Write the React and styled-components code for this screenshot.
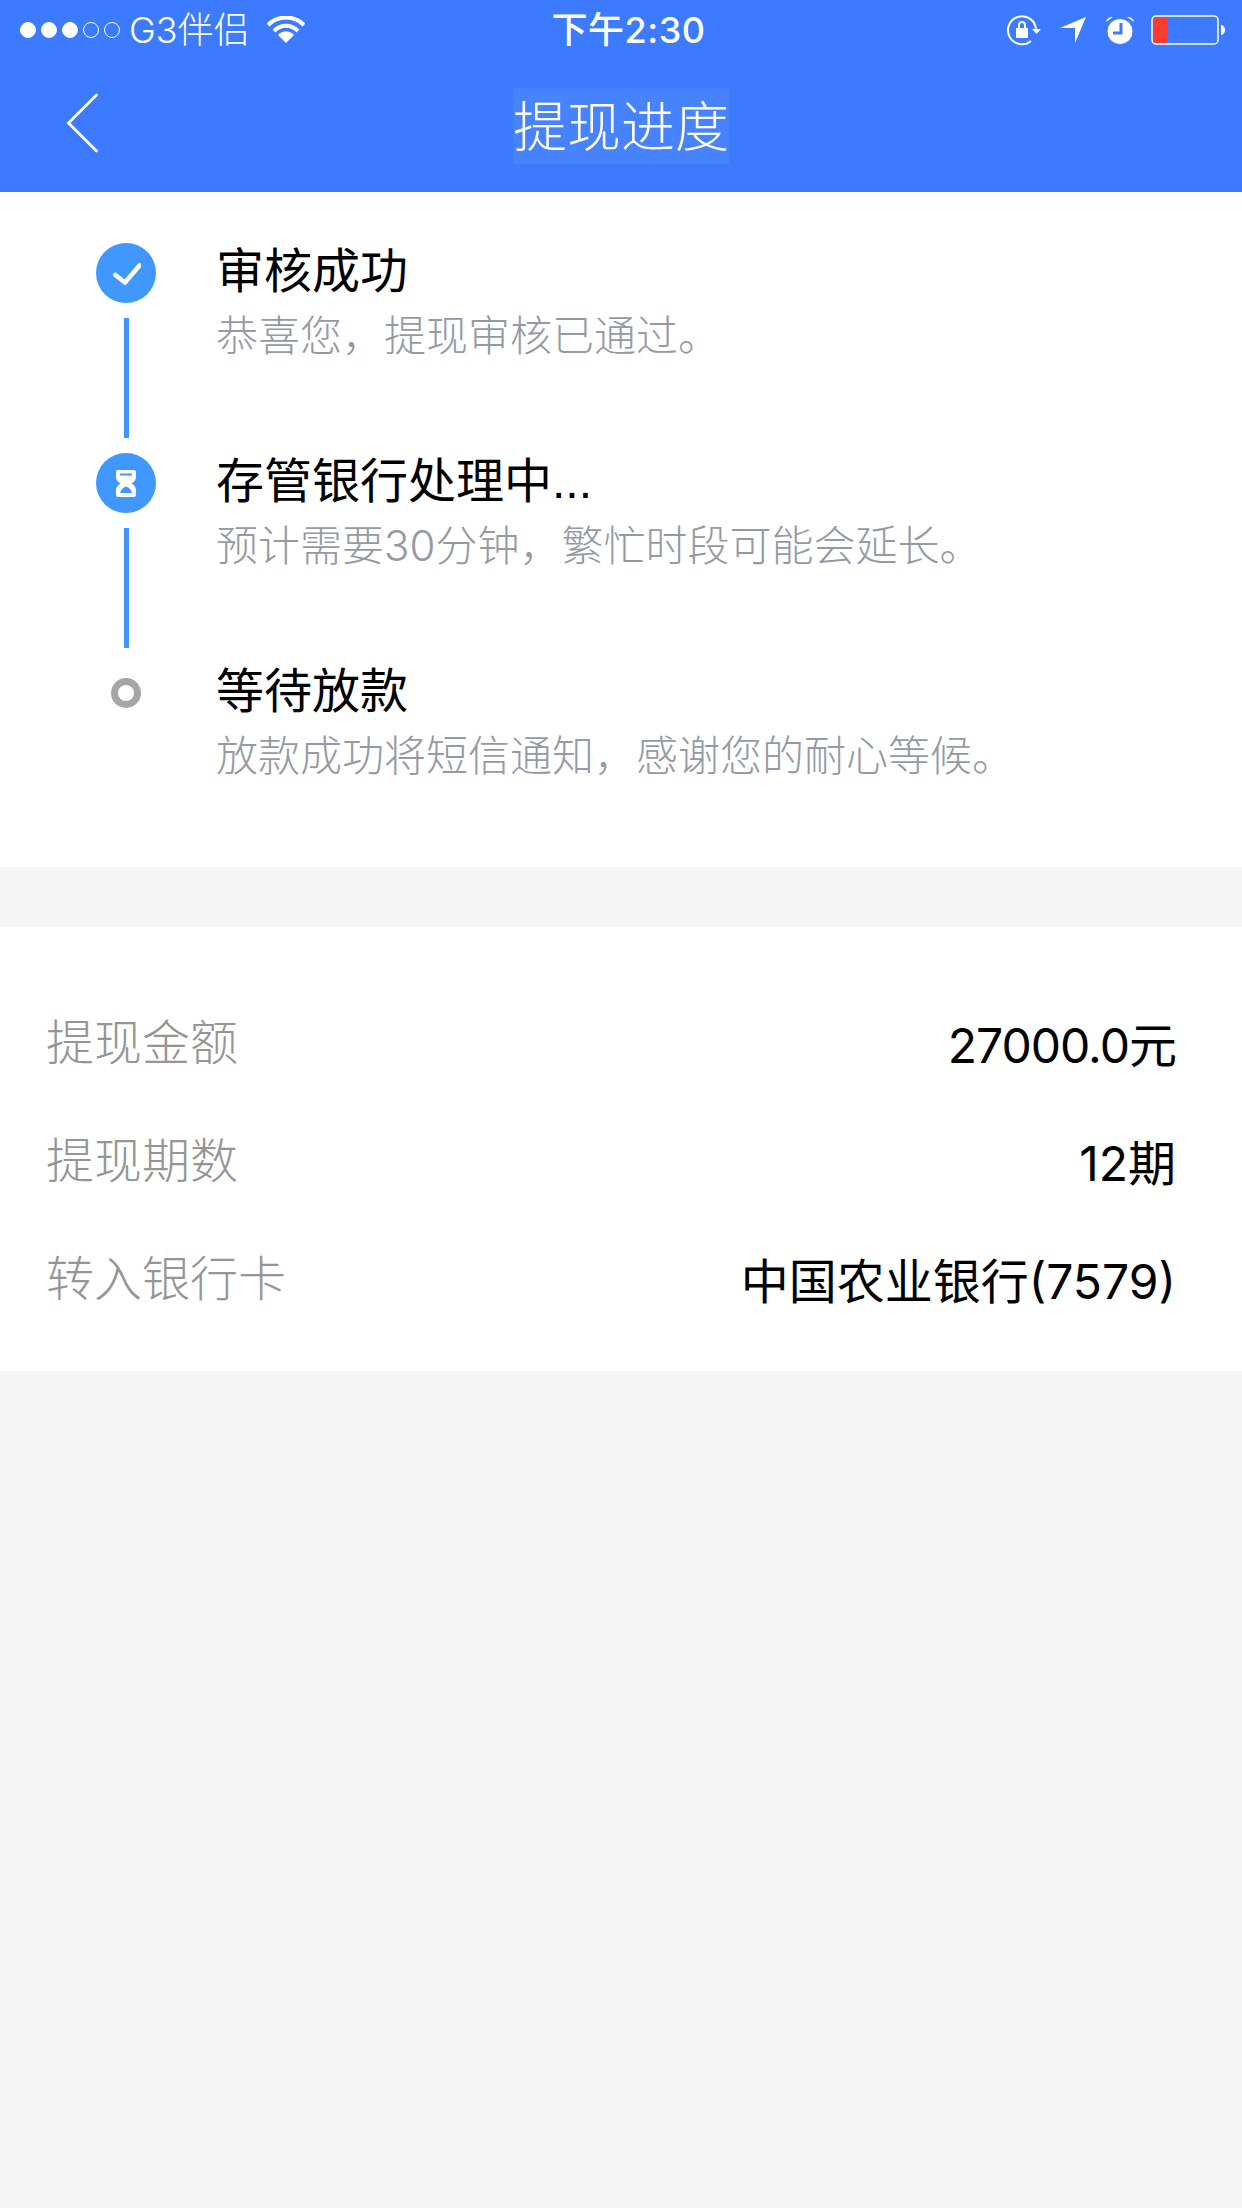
import React from "react";
import styled, { createGlobalStyle } from "styled-components";

const GlobalStyle = createGlobalStyle`
  html, body {
    margin: 0;
    padding: 0;
    background-color: #f5f5f5;
  }
  body {
    font-family: "Inter", "Noto Sans CJK SC", sans-serif;
  }
`;

const Page = styled.div`
  width: 1242px;
  height: 2208px;
  background-color: #f5f5f5;
  overflow: hidden;
`;

const Header = styled.header`
  height: 192px;
  background-color: #3c7bff;
  color: #fff;
`;

const StatusBar = styled.div`
  height: 60px;
  display: grid;
  grid-template-columns: 1fr auto 1fr;
  align-items: center;
  padding: 0 17px 0 20px;
`;

const StatusLeft = styled.div`
  display: flex;
  align-items: center;
`;

const StatusRight = styled.div`
  display: flex;
  align-items: center;
  justify-content: flex-end;
`;

const Signal = styled.div`
  display: flex;
  gap: 5px;
  margin-right: 9px;
`;

const Dot = styled.span`
  width: 16px;
  height: 16px;
  box-sizing: border-box;
  border-radius: 50%;
  border: 1px solid #fff;
  background-color: ${(p) => (p.$on ? "#fff" : "transparent")};
`;

const StatusText = styled.span`
  font-size: 36px;
  line-height: 60px;
  font-weight: 300;
`;

const Clock = styled.span`
  font-size: 36px;
  line-height: 60px;
  font-weight: 500;
  letter-spacing: 0.5px;
  margin-left: 12px;
`;

const NavBar = styled.div`
  height: 132px;
  display: flex;
  align-items: center;
  justify-content: center;
  position: relative;
`;

const BackIcon = styled.svg`
  position: absolute;
  left: 66px;
  top: 32px;
`;

const Title = styled.h1`
  margin: 0;
  height: 76px;
  font-size: 54px;
  line-height: 80px;
  font-weight: 300;
  background-color: rgba(255, 255, 255, 0.06);
`;

const Card = styled.section`
  background-color: #fff;
`;

const StepsCard = styled(Card)`
  height: 675px;
  padding: 51px 0 0 96px;
  box-sizing: border-box;
`;

const Step = styled.div`
  display: flex;
  height: 210px;
`;

const Marker = styled.div`
  width: 60px;
  display: flex;
  flex-direction: column;
  align-items: center;
  margin-right: 60px;
`;

const Circle = styled.div`
  width: 60px;
  height: 60px;
  flex: none;
  border-radius: 50%;
  background-color: #4098ff;
  display: flex;
  align-items: center;
  justify-content: center;
`;

const Ring = styled.div`
  width: 30px;
  height: 30px;
  box-sizing: border-box;
  margin-top: 15px;
  border-radius: 50%;
  border: 7px solid #a6a6a6;
`;

const Line = styled.div`
  width: 5px;
  height: 120px;
  margin-top: 15px;
  background-color: #4098ff;
`;

const StepTitle = styled.div`
  font-family: "Liberation Sans", "Noto Sans CJK SC", sans-serif;
  font-size: 48px;
  line-height: 56px;
  color: #000;
  margin-top: 1px;
`;

const StepNote = styled.div`
  font-size: 42px;
  line-height: 50px;
  margin-top: 11px;
  color: #949aa4;
  font-weight: 300;
`;

const InfoCard = styled(Card)`
  height: 444px;
  margin-top: 60px;
  padding: 88px 66px 0 46px;
  box-sizing: border-box;
`;

const InfoRow = styled.div`
  display: flex;
  justify-content: space-between;
  height: 118px;
`;

const InfoLabel = styled.span`
  font-size: 48px;
  line-height: 56px;
  color: #959595;
  font-weight: 300;
`;

const InfoValue = styled.span`
  font-size: 48px;
  line-height: 56px;
  margin-top: 3px;
  color: #000;
  letter-spacing: ${(p) => (p.$tight ? "-1px" : "0")};
`;

const steps = [
  { title: "审核成功", note: "恭喜您，提现审核已通过。", icon: "check" },
  { title: "存管银行处理中...", note: "预计需要30分钟，繁忙时段可能会延长。", icon: "wait" },
  { title: "等待放款", note: "放款成功将短信通知，感谢您的耐心等候。" },
];

const info = [
  { label: "提现金额", value: "27000.0元", tight: true },
  { label: "提现期数", value: "12期" },
  { label: "转入银行卡", value: "中国农业银行(7579)" },
];

const CheckIcon = () => (
  <svg width="30" height="24" viewBox="0 0 30 24">
    <path d="M4.300 14L14 21.500 28.700 4.300" fill="none" stroke="#fff" strokeWidth="4.5" strokeLinecap="round" strokeLinejoin="round" />
  </svg>
);

const HourglassIcon = () => (
  <svg width="20" height="27" viewBox="0 0 20 27">
    <path
      fill="#fff"
      fillRule="evenodd"
      d="M2 0h16a2 2 0 0 1 2 2v5c0 3-2 5-4.500 6.500C18 15 20 17 20 20v5a2 2 0 0 1-2 2H2a2 2 0 0 1-2-2v-5c0-3 2-5 4.500-6.500C2 12 0 10 0 7V2a2 2 0 0 1 2-2zM4 3.500v2h12v-2zM10 16.500c-3 1-5 3-6 6.500h12c-1-3.500-3-5.500-6-6.500z"
    />
  </svg>
);

const Main = () => {
  return (
    <Page>
      <GlobalStyle />
      <Header>
        <StatusBar>
          <StatusLeft>
            <Signal>
              {[1, 2, 3, 4, 5].map((n) => (
                <Dot key={n} $on={n <= 3} />
              ))}
            </Signal>
            <StatusText>G3伴侣</StatusText>
            <svg width="38" height="28" viewBox="0 0 38 28" style={{ marginLeft: 17 }}>
              <path d="M1 9C11-1 27-1 37 9" fill="none" stroke="#fff" strokeWidth="4" />
              <path d="M7 15c7-7 17-7 24 0" fill="none" stroke="#fff" strokeWidth="4" />
              <path d="M11 19c5-5 11-5 16 0l-8 8z" fill="#fff" />
            </svg>
          </StatusLeft>
          <Clock>下午2:30</Clock>
          <StatusRight>
            <svg width="36" height="32" viewBox="0 0 36 32">
              <path d="M30 16A14 14 0 1 0 25 27" fill="none" stroke="#fff" strokeWidth="2" />
              <path d="M26 15h9l-4.500 5z" fill="#fff" />
              <path d="M10 14h12v10H10zM12 14v-3a4 4 0 0 1 8 0v3h-2v-3a2 2 0 0 0-4 0v3z" fill="#fff" />
            </svg>
            <svg width="28" height="28" viewBox="0 0 28 28" style={{ marginLeft: 17 }}>
              <path d="M1 12L27 1 16 27V12z" fill="#fff" />
            </svg>
            <svg width="30" height="30" viewBox="0 0 30 30" style={{ marginLeft: 18 }}>
              <circle cx="15" cy="16.500" r="13" fill="#fff" stroke="#3c7bff" strokeWidth="1" />
              <path d="M1 7a6 6 0 0 1 7-5zM29 7a6 6 0 0 0-7-5z" fill="#fff" />
              <path d="M16 8v10H8" fill="none" stroke="#3c7bff" strokeWidth="3" />
            </svg>
            <svg width="74" height="30" viewBox="0 0 74 30" style={{ marginLeft: 16 }}>
              <rect x="1" y="1" width="66" height="28" rx="4" fill="none" stroke="#fff" strokeWidth="1.500" />
              <rect x="3" y="3" width="14" height="25" rx="2" fill="#ff3b30" />
              <path d="M70 10a4 5 0 0 1 0 10z" fill="#fff" />
            </svg>
          </StatusRight>
        </StatusBar>
        <NavBar>
          <BackIcon width="33" height="62" viewBox="0 0 33 62">
            <path d="M30.500 3L2.500 31l28 28" fill="none" stroke="#fff" strokeWidth="2.8" strokeLinecap="round" />
          </BackIcon>
          <Title>提现进度</Title>
        </NavBar>
      </Header>

      <StepsCard>
        {steps.map((step, i) => (
          <Step key={step.title}>
            <Marker>
              {step.icon ? (
                <Circle>{step.icon === "check" ? <CheckIcon /> : <HourglassIcon />}</Circle>
              ) : (
                <Ring />
              )}
              {i < steps.length - 1 && <Line />}
            </Marker>
            <div>
              <StepTitle>{step.title}</StepTitle>
              <StepNote>{step.note}</StepNote>
            </div>
          </Step>
        ))}
      </StepsCard>

      <InfoCard>
        {info.map((row) => (
          <InfoRow key={row.label}>
            <InfoLabel>{row.label}</InfoLabel>
            <InfoValue $tight={row.tight}>{row.value}</InfoValue>
          </InfoRow>
        ))}
      </InfoCard>
    </Page>
  );
};

export default Main;
